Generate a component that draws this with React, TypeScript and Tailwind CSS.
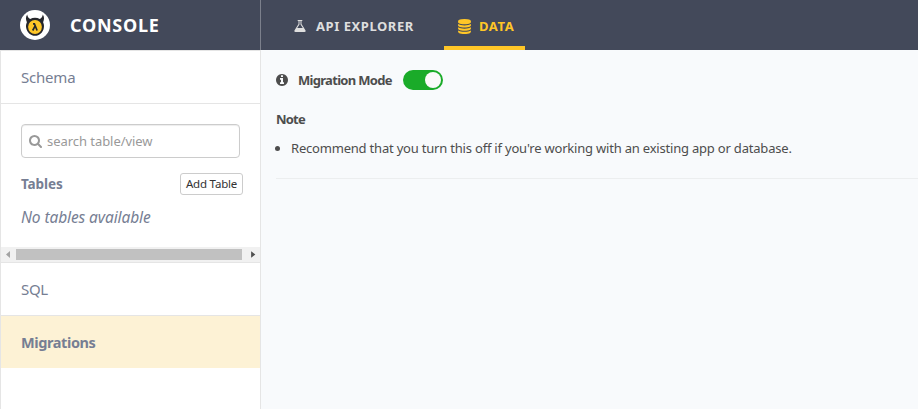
import React from "react";

const paths = {
  flask:
    "M1591 1448q56 89 21.5 152.5t-140.5 63.5h-1152q-106 0-140.5-63.5t21.5-152.5l503-793v-399h-64q-26 0-45-19t-19-45 19-45 45-19h512q26 0 45 19t19 45-19 45-45 19h-64v399zm-779-725l-272 429h712l-272-429-20-31v-436h-128v436z",
  database:
    "M896 768q237 0 443-43t325-127v170q0 69-103 128t-280 93.5-385 34.5-385-34.5-280-93.5-103-128v-170q119 84 325 127t443 43zm0 768q237 0 443-43t325-127v170q0 69-103 128t-280 93.5-385 34.5-385-34.5-280-93.5-103-128v-170q119 84 325 127t443 43zm0-384q237 0 443-43t325-127v170q0 69-103 128t-280 93.5-385 34.5-385-34.5-280-93.5-103-128v-170q119 84 325 127t443 43zm0-1152q208 0 385 34.5t280 93.5 103 128v128q0 69-103 128t-280 93.5-385 34.5-385-34.5-280-93.5-103-128v-128q0-69 103-128t280-93.5 385-34.5z",
  search:
    "M1152 832q0-185-131.5-316.5t-316.5-131.5-316.5 131.5-131.5 316.5 131.5 316.5 316.5 131.5 316.5-131.5 131.5-316.5zm512 832q0 52-38 90t-90 38q-54 0-90-38l-343-342q-179 124-399 124-143 0-273.5-55.5t-225-150-150-225-55.5-273.5 55.5-273.5 150-225 225-150 273.5-55.5 273.5 55.5 225 150 150 225 55.5 273.5q0 220-124 399l343 343q37 37 37 90z",
  info:
    "M1152 1376v-160q0-14-9-23t-23-9h-96v-512q0-14-9-23t-23-9h-320q-14 0-23 9t-9 23v160q0 14 9 23t23 9h96v320h-96q-14 0-23 9t-9 23v160q0 14 9 23t23 9h448q14 0 23-9t9-23zm-128-896v-160q0-14-9-23t-23-9h-192q-14 0-23 9t-9 23v160q0 14 9 23t23 9h192q14 0 23-9t9-23zm640 416q0 209-103 385.5t-279.5 279.5-385.5 103-385.5-103-279.5-279.5-103-385.5 103-385.5 279.5-279.5 385.5-103 385.5 103 279.5 279.5 103 385.5z",
};

function Icon({ name, className }: { name: keyof typeof paths; className: string }) {
  return (
    <svg viewBox="0 0 1792 1792" fill="currentColor" className={`shrink-0 ${className}`}>
      <path d={paths[name]} />
    </svg>
  );
}

function Logo() {
  return (
    <svg viewBox="0 0 30 30" className="h-[30px] w-[30px] shrink-0">
      <circle cx="15" cy="15" r="15" fill="#fff" />
      <path
        d="M7.2 4.6C5.4 7 5.8 10 6.9 12.2C6 14 5.8 16 6.2 18C7.2 22.800 11 25.800 15 25.800C19.500 25.800 23 22.500 23.800 18C24.200 16 24 14 23.100 12.200C24.200 10 24.600 7 22.800 4.600C22.500 7 21.500 8.300 19.800 8.900C17 7.300 13 7.300 10.200 8.900C8.500 8.300 7.500 7 7.200 4.600Z"
        fill="#25262b"
      />
      <circle cx="15" cy="17" r="6.9" fill="#ffc627" />
      <path d="M13 13.800h1.400l2.700 6.700M15 16.200l-2.300 4.300" fill="none" stroke="#25262b" strokeWidth="1.700" />
    </svg>
  );
}

function Header() {
  return (
    <header className="flex h-[50px] shrink-0 bg-[#43495a]">
      <div className="flex w-[261px] items-center border-r border-[#7c808c] pl-5">
        <Logo />
        <span className="ml-5 text-[18px] font-bold tracking-[0.75px] text-white">CONSOLE</span>
      </div>
      <nav className="flex text-[13px] font-bold">
        <a className="ml-8 flex h-[50px] items-center pt-[2px] text-[#dedede]">
          <Icon name="flask" className="h-[14px] w-[14px]" />
          <span className="mt-[2px] ml-[9px] w-[98px] whitespace-nowrap tracking-[0.55px]">API EXPLORER</span>
        </a>
        <a className="ml-[30px] flex h-[50px] w-[81px] items-center border-b-4 border-[#ffc627] pt-[7px] pl-[13px] text-[#ffc627]">
          <Icon name="database" className="-mt-px h-[15px] w-[15px]" />
          <span className="ml-[7px] tracking-[0.6px]">DATA</span>
        </a>
      </nav>
    </header>
  );
}

function Sidebar() {
  return (
    <aside className="flex w-[261px] shrink-0 flex-col border-x border-t border-[#e5e5e5] bg-white text-[15px] text-[#767e93]">
      <div className="flex h-[53px] items-center border-b border-[#e5e5e5] pl-5">
        <span className="tracking-[-0.2px]">Schema</span>
      </div>
      <div className="h-[143px] px-5 pt-5">
        <div className="flex h-[34px] w-[219px] items-center rounded border border-[#ccc] pl-[7px] text-[#999] shadow-[inset_0_1px_1px_rgba(0,0,0,0.075)]">
          <Icon name="search" className="h-[14px] w-[14px]" />
          <span className="mt-px ml-[4px] text-[13px] tracking-[-0.05px]">search table/view</span>
        </div>
        <div className="mt-[15px] flex h-[22px] w-[222px] items-center justify-between">
          <span className="mt-px text-[13.500px] font-bold tracking-[-0.1px]">Tables</span>
          <button className="h-[22px] w-[63px] rounded-[3px] border border-[#ccc] text-[11.500px] leading-[20px] tracking-[-0.2px] whitespace-nowrap text-[#333]">
            Add Table
          </button>
        </div>
        <p className="mt-[10px] text-[15.500px] leading-[24px] tracking-[-0.1px] italic">No tables available</p>
      </div>
      <div className="flex h-[16px] items-center border-b border-[#e5e5e5] bg-[#f1f1f1]">
        <svg viewBox="0 0 15 15" className="h-[15px] w-[15px]">
          <path d="M9 4v7L5 7.500Z" fill="#a3a3a3" />
        </svg>
        <div className="h-[11px] w-[226px] bg-[#c1c1c1]" />
        <svg viewBox="0 0 15 15" className="ml-1 h-[15px] w-[14px]">
          <path d="M5.500 4v7L10 7.500Z" fill="#505050" />
        </svg>
      </div>
      <div className="flex h-[53px] items-center border-b border-[#e5e5e5] pl-5">
        <span className="tracking-[-0.3px]">SQL</span>
      </div>
      <div className="flex h-[52px] items-center bg-[#fdf2d5] pl-5 font-bold">
        <span className="mt-[2px] text-[14.500px] tracking-[-0.4px]">Migrations</span>
      </div>
    </aside>
  );
}

function Content() {
  return (
    <main className="flex-1 bg-[#f8fafc] pt-5 pl-[15px] text-[13px] text-[#4d4d4d]">
      <div className="flex h-5 items-center font-bold">
        <Icon name="info" className="-ml-px h-[14px] w-[14px]" />
        <span className="mt-[2px] ml-[9px] w-[95px] text-[13px] tracking-[-0.7px] whitespace-nowrap">Migration Mode</span>
        <div className="ml-[10px] flex h-5 w-10 items-center justify-end rounded-full bg-[#1aab29] pr-[2px]">
          <div className="h-4 w-4 rounded-full bg-[#fafafa]" />
        </div>
      </div>
      <div className="mt-[19px] h-5 text-[13px] leading-5 font-bold tracking-[-0.8px]">Note</div>
      <ul className="mt-[9px]">
        <li className="flex h-5 items-center">
          <span className="-ml-px h-[5px] w-[5px] rounded-full bg-current" />
          <span className="mt-[2px] ml-[11px] tracking-[-0.2px] whitespace-nowrap">
            Recommend that you turn this off if you&apos;re working with an existing app or database.
          </span>
        </li>
      </ul>
      <hr className="mt-5 border-t border-[#eceeef]" />
    </main>
  );
}

export default function App() {
  return (
    <div className="flex h-[409px] w-[918px] flex-col overflow-hidden font-['Noto_Sans',sans-serif]">
      <Header />
      <div className="flex flex-1">
        <Sidebar />
        <Content />
      </div>
    </div>
  );
}
